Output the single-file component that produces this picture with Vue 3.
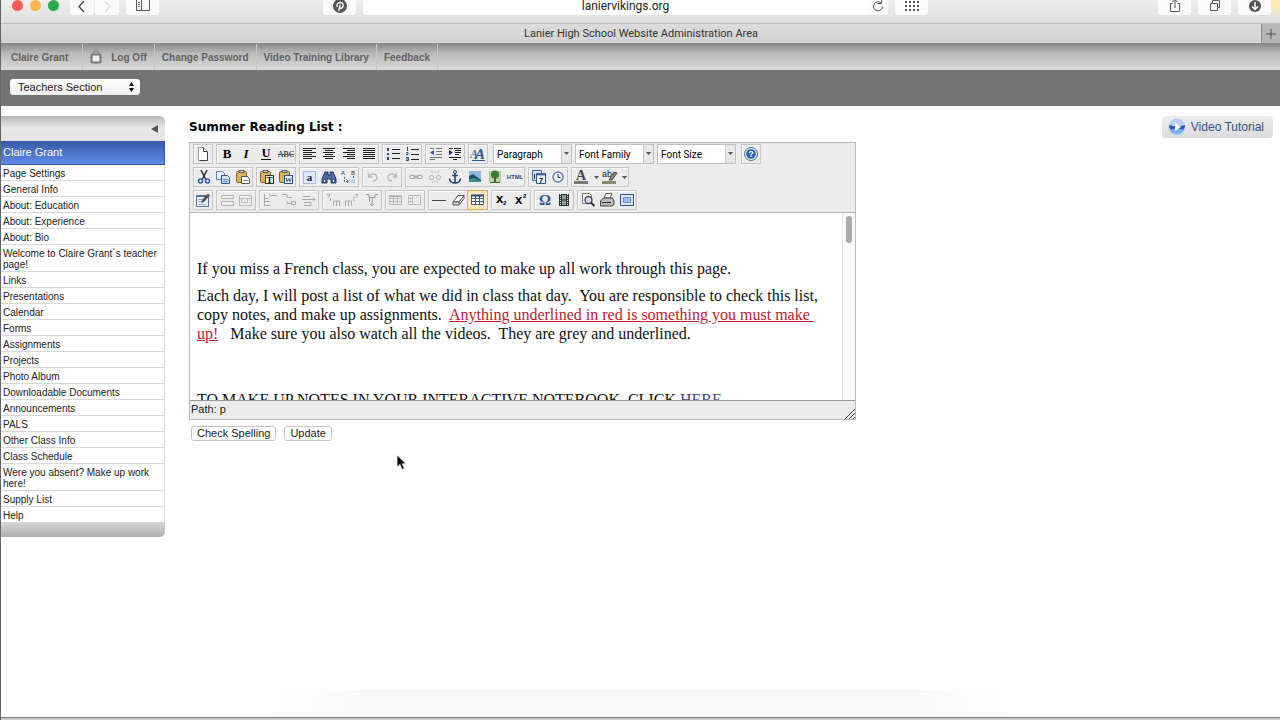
<script setup>
import { ref } from 'vue'

const account = [
  { label: 'Claire Grant' },
  { label: 'Log Off', lock: true },
  { label: 'Change Password' },
  { label: 'Video Training Library' },
  { label: 'Feedback' }
]

const pages = [
  'Page Settings', 'General Info', 'About: Education', 'About: Experience', 'About: Bio',
  'Welcome to Claire Grant`s teacher page!', 'Links', 'Presentations', 'Calendar', 'Forms',
  'Assignments', 'Projects', 'Photo Album', 'Downloadable Documents', 'Announcements', 'PALS',
  'Other Class Info', 'Class Schedule', 'Were you absent? Make up work here!', 'Supply List', 'Help'
]

const section = ref('Teachers Section')

const row1 = [
  ['new'], ['bold', 'italic', 'underline', 'strike'], ['left', 'center', 'right', 'justify'],
  ['bullets', 'numbers'], ['outdent', 'indent'], ['styles']
]
const selects = ['Paragraph', 'Font Family', 'Font Size']
const row2 = [
  ['cut', 'copy', 'paste'], ['pasteText', 'pasteWord'], ['selectAll', 'find', 'replace'],
  ['undo', 'redo'], ['link', 'unlink', 'anchor', 'image', 'tree', 'html'], ['date', 'time']
]
const row3 = [
  ['edit'], ['rowProps', 'cellProps'], ['rowBefore', 'rowAfter', 'rowDelete'],
  ['colBefore', 'colAfter', 'colDelete'], ['split', 'merge'], ['rule', 'eraser', 'table'],
  ['sub', 'sup'], ['omega', 'film'], ['preview', 'print', 'fullscreen']
]

const lines = (list, color = '#222') =>
  list.map(([x, y, w]) => `<path d="M${x} ${y}.5h${w}" stroke="${color}"/>`).join('')
const serif = 'font-family="Liberation Serif, serif"'
const sans = 'font-family="Liberation Sans, sans-serif"'
const clip = '<rect x="1.5" y="2.5" width="10" height="11" rx="1" fill="#d9b45c" stroke="#7c6430"/><path d="M4 3.5h5v-2h-5z" fill="#ddd" stroke="#555"/>'
const grid = (c) => `<path d="M1.5 3.5h12v9h-12zM1.5 6.5h12M1.5 9.5h12M5.5 3.5v9M9.5 3.5v9" fill="none" stroke="${c}"/>`

const icons = {
  new: '<path d="M3.5 1.5h5l4 4v9h-9z" fill="#fff" stroke="#999"/><path d="M8.5 1.5v4h4M12.5 6v8.500h-8" fill="none" stroke="#444"/>',
  bold: `<text x="8" y="12" text-anchor="middle" ${serif} font-size="13" font-weight="700">B</text>`,
  italic: `<text x="8" y="12" text-anchor="middle" ${serif} font-size="13" font-weight="700" font-style="italic">I</text>`,
  underline: `<text x="8" y="11" text-anchor="middle" ${serif} font-size="12" font-weight="700">U</text><path d="M3 13.500h10" stroke="#111"/>`,
  strike: `<text x="8" y="11" text-anchor="middle" ${serif} font-size="8">ABC</text><path d="M0 8.500h16" stroke="#555"/>`,
  left: lines([[1, 2, 13], [1, 4, 9], [1, 6, 13], [1, 8, 9], [1, 10, 13], [1, 12, 9]]),
  center: lines([[2, 2, 12], [4, 4, 8], [2, 6, 12], [4, 8, 8], [2, 10, 12], [4, 12, 8]]),
  right: lines([[2, 2, 12], [6, 4, 8], [2, 6, 12], [6, 8, 8], [2, 10, 12], [6, 12, 8]]),
  justify: lines([[2, 2, 12], [2, 4, 12], [2, 6, 12], [2, 8, 12], [2, 10, 12], [2, 12, 12]]),
  bullets: lines([[7, 3, 8], [7, 7, 8], [7, 12, 8]]) + '<path d="M2 2h2v3h-2zM2 7h2v2h-2zM2 11h2v3h-2z" fill="#234a8c"/>',
  numbers: lines([[7, 3, 8], [7, 8, 8], [7, 13, 8]]) + '<path d="M3.500 1v4M2 6.500h2v2h-2M2 11.500h2.500v3h-2.500M2 13h2" fill="none" stroke="#234a8c"/>',
  outdent: lines([[2, 2, 4], [8, 2, 6], [8, 5, 6], [8, 8, 6], [2, 11, 12], [2, 13, 5]], '#777') + '<path d="M6 4v5l-4-2.500z" fill="#3d5f9c"/>',
  indent: lines([[2, 2, 4], [7, 2, 7], [8, 4, 6], [8, 6, 6], [8, 8, 4], [2, 11, 12], [6, 13, 4]]) + '<path d="M2 4v5l4-2.500z" fill="#1d2f66"/>',
  styles: `<text x="0" y="12" ${serif} font-size="12" font-style="italic" font-weight="700" fill="#4a6c9f">A</text><text x="5" y="13" ${serif} font-size="15" font-style="italic" font-weight="700" fill="#31558f">A</text><path d="M2 14.500h13" stroke="#31558f"/>`,
  cut: '<path d="M5 1l5 10M11 1l-5 10" stroke="#333" stroke-width="1.500"/><circle cx="4.500" cy="12" r="2" fill="none" stroke="#315fa8" stroke-width="1.500"/><circle cx="11.500" cy="12" r="2" fill="none" stroke="#315fa8" stroke-width="1.500"/>',
  copy: '<path d="M1.500 2.500h6l2 2v6h-8z" fill="#e3ecfa" stroke="#6381b0"/><path d="M6.500 6.500h6l2 2v6h-8z" fill="#cfe0f8" stroke="#31558f"/><path d="M8 10.500h5M8 12.500h5" stroke="#5d87c4"/>',
  paste: clip + '<path d="M6.500 7.500h6l2 2v5h-8z" fill="#fff" stroke="#555"/><path d="M8 11.500h5" stroke="#888"/>',
  pasteText: clip + `<rect x="6.500" y="6.500" width="8" height="8" fill="#fff" stroke="#333"/><text x="10.500" y="14" text-anchor="middle" ${serif} font-size="9" font-weight="700">T</text>`,
  pasteWord: clip + `<rect x="6.500" y="6.500" width="8" height="8" fill="#e8f0ff" stroke="#31558f"/><text x="10.500" y="13" text-anchor="middle" ${serif} font-size="7" font-weight="700" fill="#1c3f86">W</text>`,
  selectAll: `<rect x="1.500" y="2.500" width="12" height="12" fill="#dce8fb" stroke="#6a88b8" stroke-dasharray="1 1"/><text x="7.500" y="12" text-anchor="middle" ${serif} font-size="11" font-weight="700" fill="#222">a</text>`,
  find: '<path d="M4 3h3v3h2v-3h3l3 7v4h-5v-4h-4v4h-5v-4z" fill="#4b6ba8" stroke="#22345c"/><path d="M3.500 11v2M12.500 11v2" stroke="#cfe0f8"/>',
  replace: `<text x="0" y="6" ${sans} font-size="6" fill="#333">A</text><text x="10" y="6" ${sans} font-size="6" fill="#333">B</text><path d="M3.500 8v4.500h4m-2-2l2 2-2 2M12.500 7v3" fill="none" stroke="#4b6ba8" stroke-dasharray="2 1"/><path d="M10 10h4v4h-4z" fill="#b8cbea"/>`,
  undo: '<path d="M3.500 4v4h4M4 8c2-5 9-3 8 1-.5 2-2 3-4 3" fill="none" stroke="#bbb" stroke-width="1.300"/>',
  redo: '<path d="M12.500 4v4h-4M12 8c-2-5-9-3-8 1 .5 2 2 3 4 3" fill="none" stroke="#bbb" stroke-width="1.300"/>',
  link: '<rect x="1.500" y="6.500" width="6" height="3" rx="1.500" fill="none" stroke="#aaa"/><rect x="8.500" y="6.500" width="6" height="3" rx="1.500" fill="none" stroke="#aaa"/><path d="M5 8h6" stroke="#999"/>',
  unlink: '<rect x="2.500" y="6.500" width="4" height="4" rx="1.500" fill="none" stroke="#bbb"/><rect x="9.500" y="6.500" width="4" height="4" rx="1.500" fill="none" stroke="#bbb"/><path d="M4 2l2 2M8 2v2M12 2l-2 2M5 14l2-2M11 14l-2-2" stroke="#bbb"/>',
  anchor: '<circle cx="8" cy="3" r="1.500" fill="none" stroke="#27406f"/><path d="M8 4.500v9.500M5 6.500h6M2.500 9.500c0 3 3 4.500 5.500 4.500s5.500-1.500 5.500-4.500" fill="none" stroke="#27406f" stroke-width="1.600"/>',
  image: '<path d="M2 2h12v11h-12z" fill="#8db9df"/><path d="M2 7l4-2 8 6v2h-12z" fill="#24506f"/><path d="M2 10l5-1 7 3v1h-12z" fill="#3d8f83"/>',
  tree: '<path d="M2 2h12v11h-12z" fill="#b5cfa8"/><circle cx="8" cy="5.500" r="4" fill="#3c7d35"/><path d="M7 8h2v5h-2z" fill="#6b4a2c"/><path d="M3 13.500h10" stroke="#3c6d35"/>',
  html: `<text x="8" y="10" text-anchor="middle" ${sans} font-size="6" font-weight="700" fill="#2c4c86">HTML</text>`,
  date: `<path d="M1.500 1.500h9v10h-9z" fill="#d5e2f6" stroke="#47689e"/><path d="M5.500 4.500h9v10h-9z" fill="#eef4ff" stroke="#31558f"/><path d="M6 5.500h8" stroke="#47689e" stroke-width="2"/><text x="10" y="14" text-anchor="middle" ${sans} font-size="8" font-weight="700" fill="#223">7</text><path d="M3.500 5v5" stroke="#222"/>`,
  time: '<circle cx="8" cy="8" r="5" fill="#edf3fc" stroke="#6480ad" stroke-width="1.500"/><path d="M8 5v3.500h2.500" fill="none" stroke="#333"/>',
  edit: '<path d="M1.500 3.500h12v11h-12z" fill="#eef3fb" stroke="#5b7296"/><path d="M2 4.500h11" stroke="#5b7296"/><path d="M3 7.500h5M3 9.500h4M3 12.500h8" stroke="#9aaac4"/><path d="M6 11l1-3 6-6.500 2 2-6 6.500z" fill="#555"/>',
  rowProps: '<path d="M2.500 3.500h12v3h-12zM2.500 9.500h12v4h-12z" fill="#eee" stroke="#b5b5b5"/>',
  cellProps: '<path d="M1.500 3.500h12v10h-12zM1.500 6.500h12M9.500 6.500v4h-6v-4" fill="none" stroke="#bbb"/>',
  rowBefore: '<path d="M2.500 2v12M2.500 6.500h4M2.500 9.500h6M2.500 13.500h6M9 3.500h6M8 2v3" fill="none" stroke="#aaa"/>',
  rowAfter: '<path d="M1 2.500h5v3h5M6 9v2.500h4M10.500 9.500h4v3h-4z" fill="none" stroke="#aaa"/>',
  rowDelete: '<path d="M2 4.500h7M1 7.500h13M12 5.500l2 2-2 2M3 10.500h7v3h-7" fill="none" stroke="#aaa"/>',
  colBefore: '<path d="M2 2.500h3l-2 3M5.500 6v3M8.500 14v-5h3v5M11.500 9h3v5" fill="none" stroke="#aaa"/>',
  colAfter: '<path d="M1.500 14v-5h3v5M4.500 9h3v5M10 9v-4M11 2.500h3l-2 3" fill="none" stroke="#aaa"/>',
  colDelete: '<path d="M2 2.500h3v3h6v-3h3M8 5v9M6 12l2 2 2-2M5.500 6v4" fill="none" stroke="#999"/>',
  split: grid('#bbb') + '<path d="M2 4.500h11" stroke="#aaa"/>',
  merge: '<path d="M1.500 3.500h12v9h-12zM1.500 6.500h4M1.500 9.500h4M5.500 3.500v9M9.500 3.500v2" fill="none" stroke="#bbb"/>',
  rule: '<path d="M1 8.500h14" stroke="#444"/>',
  eraser: '<path d="M3 10l5-6.500h6l-5 6.500z" fill="#fff" stroke="#555"/><path d="M3 10h6v3h-6z" fill="#ddd" stroke="#555"/><path d="M9 13l5-6.500v-3" fill="none" stroke="#555"/>',
  table: '<path d="M1 3h14v10h-14z" fill="#fff"/>' + grid('#44597f') + '<path d="M1 3.500h13" stroke="#2f4776" stroke-width="2"/>',
  sub: `<text x="2" y="11" ${sans} font-size="13" font-weight="700">x</text><text x="9" y="13" ${sans} font-size="6" font-weight="700">2</text>`,
  sup: `<text x="2" y="12" ${sans} font-size="13" font-weight="700">x</text><text x="10" y="6" ${sans} font-size="6" font-weight="700">2</text>`,
  omega: `<text x="8" y="13" text-anchor="middle" ${serif} font-size="15" font-weight="700" fill="#31558f">Ω</text>`,
  film: '<path d="M3 2h10v12h-10z" fill="#333"/><path d="M6 3h4v4.500h-4zM6 8.500h4v4.500h-4z" fill="#7fa08a"/><path d="M4.500 2v12M11.500 2v12" stroke="#ddd" stroke-dasharray="1 1"/>',
  preview: '<path d="M2.500 1.500h7l2 2v8h-9z" fill="#f5f5f5" stroke="#777"/><circle cx="8.500" cy="8" r="3.500" fill="#cfe0f5" stroke="#444" stroke-width="1.300"/><path d="M11 10.500l3.500 3.500" stroke="#333" stroke-width="2"/>',
  print: '<path d="M5 6l2-4.500h6l-2 4.500z" fill="#fff" stroke="#666"/><path d="M1.500 9l3-3h9l1.500 3v3.500l-2 1.500h-11.500z" fill="#bbb" stroke="#444"/><path d="M3 10.500h9" stroke="#333"/>',
  fullscreen: '<path d="M1.500 2.500h13v11h-13z" fill="#dbe6f8" stroke="#31558f"/><path d="M4.500 5.500h7v5h-7z" fill="#9dbdec" stroke="#6d93cf"/>',
  help: '<circle cx="8" cy="8" r="6.500" fill="#dce8fa" stroke="#53739f"/><circle cx="8" cy="8" r="4.800" fill="#2d62b4"/>' + `<text x="8" y="11" text-anchor="middle" ${sans} font-size="9" font-weight="700" fill="#fff">?</text>`
}
</script>

<template>
  <div class="window">
    <header class="chrome">
      <div class="side">
        <div class="lights"><i class="red"></i><i class="yellow"></i><i class="green"></i></div>
        <div class="pair">
          <button aria-label="Back"><svg width="16" height="14" viewBox="0 0 16 14"><path d="M10 1L5 6.500l5 5.500" fill="none" stroke="#444" stroke-width="1.300" /></svg></button>
          <button aria-label="Forward"><svg width="16" height="14" viewBox="0 0 16 14"><path d="M6 1l5 5.500L6 12" fill="none" stroke="#ccc" /></svg></button>
        </div>
        <button class="wide" aria-label="Sidebar"><svg width="16" height="14" viewBox="0 0 16 14"><path d="M1.500-.5h13v11h-13zM6.500-.5v11M3 2.500h2M3 4.500h2M3 6.500h2" fill="none" stroke="#555" /></svg></button>
      </div>
      <div class="middle">
        <button class="wide" aria-label="Pinterest">
          <svg width="16" height="14" viewBox="0 0 16 14"><circle cx="8" cy="6" r="7" fill="#555" /><path d="M5.500 7c-1.500-2 0-4.500 2.700-4.500s4 3 2.300 5c-1 1.200-2.500.7-2.800 0M8.300 4.500L6.700 11" fill="none" stroke="#fff" stroke-width="1.300" /></svg>
        </button>
        <div class="address">
          <span>laniervikings.org</span>
          <button aria-label="Reload"><svg width="12" height="14" viewBox="0 0 12 14"><path d="M9 3a4.500 4.500 0 1 0 1.500 3.500M9.500 0v3.500h-4" fill="none" stroke="#555" /></svg></button>
        </div>
        <button class="wide" aria-label="Top sites">
          <svg width="16" height="14" viewBox="0 0 16 14"><path d="M1 2h14M1 6h14M1 10h14" stroke="#555" stroke-width="2" stroke-dasharray="2 2" /></svg>
        </button>
      </div>
      <div class="tools">
        <button class="wide" aria-label="Share"><svg width="16" height="14" viewBox="0 0 16 14"><path d="M5.500 3.500h-2v8h9v-8h-2M8 8V0M5.500 2L8-.5 10.500 2" fill="none" stroke="#555" /></svg></button>
        <button class="wide" aria-label="Tabs"><svg width="16" height="14" viewBox="0 0 16 14"><path d="M3.500 3.500h7v7h-7zM5.500 3V.5h7v7h-2" fill="none" stroke="#555" /></svg></button>
        <button class="wide" aria-label="Downloads"><svg width="16" height="14" viewBox="0 0 16 14"><circle cx="8" cy="6" r="6" fill="#555" /><path d="M8 2v7M5 6.500L8 9.500l3-3" fill="none" stroke="#fff" stroke-width="1.500" /></svg></button>
      </div>
    </header>

    <div class="tabs">
      <span>Lanier High School Website Administration Area</span>
      <button aria-label="New tab"><svg width="12" height="12" viewBox="0 0 12 12"><path d="M6 1v10M1 6h10" stroke="#555" /></svg></button>
    </div>

    <nav class="account">
      <a v-for="a in account" :key="a.label" href="#">
        <svg v-if="a.lock" width="12" height="14" viewBox="0 0 12 14"><path d="M3.500 5V3.500a2.500 2.500 0 0 1 5 0V5" fill="none" stroke="#777" /><rect x="1.500" y="4.500" width="9" height="8" rx="1" fill="#eee" stroke="#777" stroke-width="2" /></svg>
        {{ a.label }}
      </a>
    </nav>

    <div class="band">
      <div class="picker">
        <select v-model="section" aria-label="Section"><option>Teachers Section</option></select>
        <svg width="7" height="10" viewBox="0 0 7 10"><path d="M3.500 0L6 4H1zM3.500 10L6 6H1z" fill="#111" /></svg>
      </div>
    </div>

    <div class="body">
      <aside>
        <div class="cap"><svg width="7" height="8" viewBox="0 0 7 8"><path d="M0 4l7-4v8z" fill="#555" /></svg></div>
        <h2>Claire Grant</h2>
        <ul><li v-for="p in pages" :key="p"><a href="#">{{ p }}</a></li></ul>
        <div class="foot"></div>
      </aside>

      <main>
        <h1>Summer Reading List :</h1>
        <div class="editor">
          <div class="bars">
            <div class="bar">
              <div v-for="(g, i) in row1" :key="i" class="group">
                <button v-for="n in g" :key="n" :aria-label="n"><svg width="16" height="16" viewBox="0 0 16 16" v-html="icons[n]"></svg></button>
              </div>
              <div class="drops">
                <div v-for="s in selects" :key="s" class="drop">
                  <select :aria-label="s"><option>{{ s }}</option></select>
                  <svg width="5" height="3" viewBox="0 0 5 3"><path d="M0 0h5L2.500 3z" fill="#555" /></svg>
                </div>
              </div>
              <div class="group">
                <button aria-label="Help"><svg width="16" height="16" viewBox="0 0 16 16" v-html="icons.help"></svg></button>
              </div>
            </div>
            <div class="bar">
              <div v-for="(g, i) in row2" :key="i" class="group">
                <button v-for="n in g" :key="n" :aria-label="n"><svg width="16" height="16" viewBox="0 0 16 16" v-html="icons[n]"></svg></button>
              </div>
              <div class="group">
                <button class="color" aria-label="Text color">
                  <svg width="28" height="16" viewBox="0 0 28 16"><text x="9" y="11" text-anchor="middle" font-family="Liberation Serif, serif" font-size="14" font-weight="700" fill="#444">A</text><path d="M2 12h14v3H2z" fill="#777" /><path d="M22 7h5l-2.500 3z" fill="#555" /></svg>
                </button>
                <button class="color" aria-label="Highlight color">
                  <svg width="28" height="16" viewBox="0 0 28 16"><text x="2" y="8" font-family="Liberation Sans, sans-serif" font-size="9" fill="#222">ab</text><path d="M9 11l5-8 3 1-5 7z" fill="#888" stroke="#444" /><path d="M2 12h14v3H2z" fill="#8b8a66" /><path d="M22 7h5l-2.500 3z" fill="#555" /></svg>
                </button>
              </div>
            </div>
            <div class="bar">
              <div v-for="(g, i) in row3" :key="i" class="group">
                <button v-for="n in g" :key="n" :class="{ on: n === 'table' }" :aria-label="n"><svg width="16" height="16" viewBox="0 0 16 16" v-html="icons[n]"></svg></button>
              </div>
            </div>
          </div>
          <div class="page">
            <div class="text" contenteditable="true" role="textbox" aria-label="Page content" spellcheck="false">
              <p>If you miss a French class, you are expected to make up all work through this page.</p>
              <p>Each day, I will post a list of what we did in class that day.&nbsp; You are responsible to check this list,<br>copy notes, and make up assignments.&nbsp; <u>Anything underlined in red is something you must make&nbsp;<br>up!</u>&nbsp;&nbsp; Make sure you also watch all the videos.&nbsp; They are grey and underlined.</p>
              <p class="notes">TO MAKE UP NOTES IN YOUR INTERACTIVE NOTEBOOK, CLICK <a href="#">HERE</a></p>
            </div>
            <div class="track"><div class="thumb"></div></div>
          </div>
          <div class="path">
            <span>Path: p</span>
            <svg width="10" height="10" viewBox="0 0 10 10"><path d="M0 10L10 0M4 10l6-6M8 10l2-2" stroke="#444" /></svg>
          </div>
        </div>
        <div class="actions"><button>Check Spelling</button><button>Update</button></div>
        <svg class="pointer" width="12" height="17" viewBox="0 0 12 17"><path d="M1 1v12l3-2.500 2 5 2.300-1-2-4.700H10z" fill="#111" stroke="#eee" stroke-width=".8" /></svg>
      </main>

      <a class="tutorial" href="#">
        <svg width="18" height="18" viewBox="0 0 18 18"><circle cx="9" cy="9" r="8.500" fill="#b9cff5" /><path d="M1 7l4 1h8l4-1a8 8 0 0 1-16 0z" fill="#3058b8" /><path d="M2 12a8 8 0 0 0 14 0l-7-2z" fill="#7fb0f5" /><path d="M7 5l6 4-6 4z" fill="#fff" /></svg>
        Video Tutorial
      </a>
    </div>
    <footer></footer>
  </div>
</template>

<style>
html, body { margin: 0; background: #fff; }
</style>

<style scoped>
* { box-sizing: border-box; }
.window { min-height: 100vh; display: flex; flex-direction: column; border-left: 1px solid #666; overflow: hidden; font-family: "Liberation Sans", Arial, sans-serif; color: #222; }
button { padding: 0; border: 0; background: none; font: inherit; color: inherit; }
svg { display: block; flex: none; }
a { color: inherit; text-decoration: none; }

.chrome { height: 24px; flex: none; display: flex; align-items: flex-start; justify-content: space-between; background: radial-gradient(circle at 100% 0, #f6ecb0 8px, transparent 18px), linear-gradient(#eee, #dedede); border-bottom: 1px solid #c2c2c2; padding: 0 9px 0 11px; }
.chrome button { width: 24px; height: 15px; display: flex; justify-content: center; background: #fbfbfb; border-radius: 0 0 3px 3px; }
.chrome button.wide { width: 33px; }
.chrome svg { overflow: visible; }
.side, .middle, .tools, .pair { display: flex; }
.side { gap: 7px; width: 311px; }
.lights { display: flex; gap: 7px; width: 51px; }
.lights i { width: 11px; height: 11px; border-radius: 50%; }
.red { background: #fb5a55; }
.yellow { background: #fdb748; }
.green { background: #2da94f; }
.pair { gap: 1px; }
.middle { flex: 1; gap: 7px; }
.address { flex: 1; display: flex; height: 15px; padding-left: 20px; background: #fff; border-radius: 0 0 3px 3px; font: 12px/13px Roboto, "Liberation Sans", sans-serif; }
.address span { flex: 1; text-align: center; }
.address button { width: 20px; }
.tools { gap: 7px; margin-left: 230px; }

.tabs { height: 20px; flex: none; display: flex; background: linear-gradient(#dcdcdc, #d2d2d2); border-bottom: 1px solid #8c8c8c; font: 11px/20px Roboto, "Liberation Sans", sans-serif; }
.tabs span { flex: 1; padding-left: 20px; text-align: center; color: #333; }
.tabs button { width: 19px; display: grid; place-items: center; background: #b5b5b5; border-left: 1px solid #8c8c8c; }

.account { height: 26px; flex: none; display: flex; background: linear-gradient(#8a8a8a, #b8b8b8 35%, #dadada); }
.account a { display: flex; align-items: center; gap: 9px; padding: 0 7px; border-right: 1px solid #c6c6c6; font-size: 10px; font-weight: 700; color: #626262; }
.account a:first-child { padding-left: 10px; padding-right: 14px; }

.band { height: 36px; flex: none; padding: 9px; background: #737373; }
.picker { position: relative; width: 130px; }
.picker select { display: block; width: 100%; height: 16px; padding: 0 8px; appearance: none; border: 0; border-radius: 3px; background: linear-gradient(#fff, #eee); font: 11px "Liberation Sans", sans-serif; color: #222; }
.picker svg { position: absolute; right: 5px; top: 3px; }

.body { flex: 1; display: flex; align-items: flex-start; padding: 10px 7px 0 0; background: linear-gradient(#f7f7f7, #fff 6px); }
aside { width: 164px; flex: none; font-size: 10px; border-radius: 0 5px 5px 0; overflow: hidden; }
.cap { height: 25px; display: flex; align-items: center; justify-content: flex-end; padding-right: 7px; background: linear-gradient(#b8b8b8, #e9e9e9 50%, #e2e2e2); }
h2 { margin: 0; height: 24px; padding-left: 2px; font-size: 11px; line-height: 23px; font-weight: 400; color: #fff; background: linear-gradient(#3659a8, #5f8be6); border-right: 1px solid #3558a5; border-bottom: 1px solid #3558a5; }
ul { margin: 0; padding: 0; list-style: none; border-right: 1px solid #ddd; }
li { padding: 3px 4px 1px 2px; line-height: 11px; border-bottom: 1px solid #d8d8d8; }
.foot { height: 14px; background: linear-gradient(#d4d4d4, #b0b0b0); }

main { flex: 1; position: relative; margin-left: 24px; }
h1 { margin: 0; font: 700 12px/22px "DejaVu Sans", Verdana, sans-serif; color: #000; }
.editor { width: 667px; margin-top: 4px; border: 1px solid #bbb; }
.bars { padding: 1px 3px 2px; background: #ececec; border-bottom: 1px solid #bbb; display: flex; flex-direction: column; gap: 3px; }
.bar { display: flex; gap: 3px; height: 20px; }
.group { display: flex; border: 1px solid #c6c6c6; box-shadow: inset 1px 1px #fafafa; }
.group button { width: 20px; height: 18px; display: grid; place-items: center; }
.group button:first-child { width: 19px; }
.group button:last-child { width: 19px; }
.group button:only-child { width: 18px; }
.group button.color { width: 28px; }
.group button.on { background: #fbe7bf; outline: 1px solid #e2ad4f; }
.drops { display: flex; gap: 3px; padding: 0 2px; }
.drop { position: relative; width: 79px; }
.drop select { display: block; width: 100%; height: 20px; padding: 0 3px; appearance: none; border: 1px solid #c0c0c0; border-radius: 0; background: linear-gradient(90deg, #fff 67px, #c8c8c8 67px, #c8c8c8 68px, #e8e8e8 68px); font: 10px Roboto, "Liberation Sans", sans-serif; color: #000; }
.drop svg { position: absolute; right: 3px; top: 8px; }
.page { height: 187px; display: flex; overflow: hidden; }
.text { flex: 1; padding: 46px 7px 0; outline: none; overflow: hidden; white-space: nowrap; font: 16px/19px "Liberation Serif", "Times New Roman", serif; color: #111; }
.text p { margin: 0 0 8px; }
.text u { color: #c02030; }
.text .notes { margin-top: 47px; }
.text .notes a { color: #4a3f78; }
.track { width: 13px; padding: 3px; background: #fafafa; border-left: 1px solid #e5e5e5; }
.thumb { height: 27px; border-radius: 4px; background: #aaa; }
.path { height: 19px; display: flex; justify-content: space-between; align-items: flex-end; padding-left: 1px; background: #ececec; border-top: 1px solid #999; font-size: 11px; line-height: 18px; }
.path span { align-self: flex-start; line-height: 16px; }
.actions { display: flex; gap: 8px; padding: 6px 2px; }
.actions button { height: 15px; padding: 0 5px; border: 1px solid #c4c4c4; border-radius: 3px; background: #fff; font-size: 11px; line-height: 13px; }
.pointer { position: absolute; left: 207px; top: 338px; }
.tutorial { display: flex; align-items: center; gap: 5px; height: 22px; padding: 0 9px 0 6px; border-radius: 4px; background: linear-gradient(#ececec, #dcdcdc); font-size: 12px; color: #384f94; }
footer { height: 31px; flex: none; background: linear-gradient(90deg, transparent 20%, #fafafa 28%, #fafafa 72%, transparent 80%); border-bottom: 2px solid #ccc; box-shadow: inset 0 -1px #777; }
</style>
